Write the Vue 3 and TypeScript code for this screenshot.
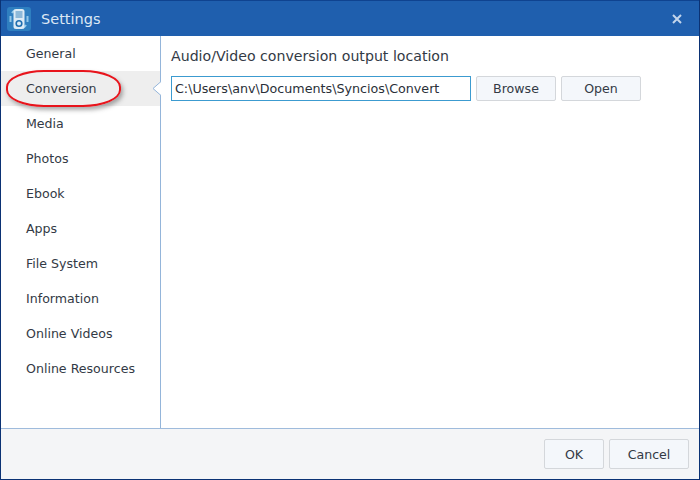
<script setup lang="ts">
const items: string[] = ['General', 'Conversion', 'Media', 'Photos', 'Ebook', 'Apps', 'File System', 'Information', 'Online Videos', 'Online Resources']
</script>

<template>
  <div class="window">
    <header class="titlebar">
      <svg class="logo" width="24" height="24" viewBox="0 0 24 24">
        <rect x="0" y="0" width="24" height="24" rx="3" fill="#2f7fc0" />
        <path d="M5 6a9 9 0 0 1 3-3M19 18a9 9 0 0 1-3 3M3.500 9v6M20.500 9v6" stroke="#8fc6e8" stroke-width="2" fill="none" />
        <rect x="6.500" y="2" width="11" height="20" rx="2.500" fill="#dcebf5" />
        <rect x="8.500" y="4" width="7" height="7" fill="#8db9d9" />
        <circle cx="12" cy="16.500" r="2.800" fill="none" stroke="#1f6fb0" stroke-width="1.600" />
      </svg>
      <span class="title">Settings</span>
      <svg class="close" width="10" height="10" viewBox="0 0 10 10">
        <path d="M1 1l8 8M9 1l-8 8" stroke="#c3d5ec" stroke-width="2" />
      </svg>
    </header>
    <div class="body">
      <nav class="sidebar">
        <div v-for="(item, i) in items" :key="item" class="nav-item" :class="{ active: i === 1 }">
          {{ item }}
          <svg v-if="i === 1" class="caret" width="9" height="15" viewBox="0 0 9 15">
            <path d="M9 0.500L1 7.500L9 14.500" fill="#fff" stroke="#94b5da" stroke-width="1" />
          </svg>
        </div>
      </nav>
      <main class="content">
        <div class="label">Audio/Video conversion output location</div>
        <div class="row">
          <div class="input">C:\Users\anv\Documents\Syncios\Convert</div>
          <button class="btn wide">Browse</button>
          <button class="btn wide">Open</button>
        </div>
      </main>
    </div>
    <footer class="footer">
      <button class="btn ok">OK</button>
      <button class="btn cancel">Cancel</button>
    </footer>
    <div class="annotation"></div>
  </div>
</template>

<style>
html, body { margin: 0; background: #fff; }
</style>

<style scoped>
.window {
  position: relative;
  width: 700px;
  height: 480px;
  box-sizing: border-box;
  border: 1px solid #0b3274;
  border-top: 0;
  display: flex;
  flex-direction: column;
  font-family: "DejaVu Sans", sans-serif;
  font-size: 13px;
  color: #333a45;
  background: #fff;
  overflow: hidden;
}
.titlebar {
  height: 36px;
  flex: none;
  background: #1f5fae;
  border-top: 1px solid #0f4390;
  box-sizing: border-box;
  display: flex;
  align-items: center;
  padding: 0 17px 0 6px;
}
.logo { flex: none; }
.title {
  margin-left: 10px;
  color: #dce8f5;
  font-size: 14.5px;
}
.close { margin-left: auto; }
.body {
  flex: 1;
  display: flex;
  min-height: 0;
}
.sidebar {
  width: 160px;
  flex: none;
  box-sizing: border-box;
  border-right: 1px solid #94b5da;
}
.nav-item {
  position: relative;
  height: 35px;
  line-height: 35px;
  padding-left: 25px;
  font-size: 12.6px;
}
.nav-item.active { background: #eeeeee; }
.caret {
  position: absolute;
  right: -1px;
  top: 10px;
}
.content {
  flex: 1;
  padding: 11px 10px 0;
}
.label {
  font-size: 14.15px;
  line-height: 18px;
  color: #333a45;
}
.row {
  display: flex;
  gap: 5px;
  margin-top: 11px;
}
.input {
  width: 300px;
  height: 25px;
  box-sizing: border-box;
  border: 1px solid #3c9bd0;
  padding-left: 3px;
  line-height: 23px;
  font-size: 12.7px;
  color: #2a2f38;
  white-space: nowrap;
}
.btn {
  font-family: inherit;
  font-size: 12.6px;
  color: #333a45;
  background: #f4f7fb;
  border: 1px solid #d4d7db;
  border-radius: 2px;
  padding: 0;
  box-sizing: border-box;
}
.btn.wide { width: 80px; height: 25px; }
.footer {
  height: 51px;
  flex: none;
  box-sizing: border-box;
  background: #f4f5f7;
  border-top: 1px solid #9fbbdc;
  display: flex;
  justify-content: flex-end;
  align-items: flex-start;
  gap: 5px;
  padding: 10px 10px 0 0;
}
.btn.ok { width: 60px; height: 30px; }
.btn.cancel { width: 80px; height: 30px; }
.annotation {
  position: absolute;
  left: 5px;
  top: 70px;
  width: 111px;
  height: 33px;
  border: 2px solid #e8141c;
  border-radius: 38px / 17px;
  box-shadow: 2px 3px 4px rgba(90, 90, 90, 0.5);
}
</style>
